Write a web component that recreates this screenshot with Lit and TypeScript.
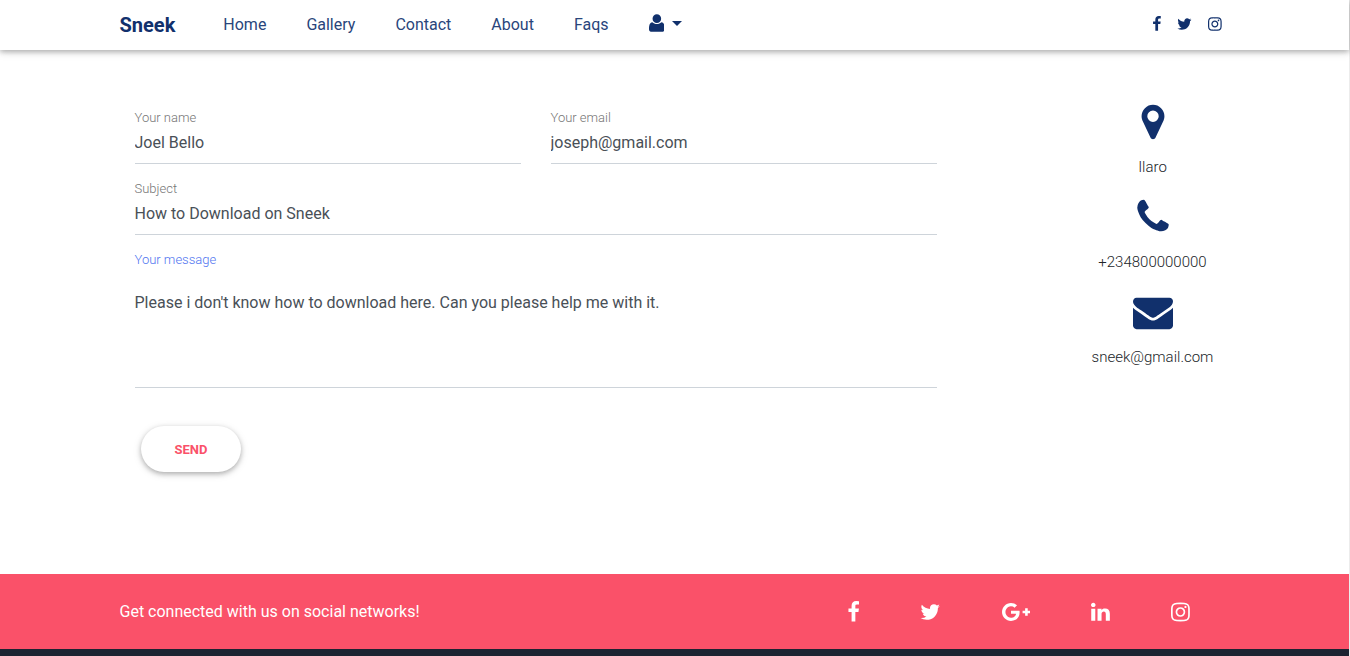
import { LitElement, html, css, svg } from "lit";
import { customElement, property } from "lit/decorators.js";

type Glyph = { box: [number, number, number, number]; path: string };

const GLYPHS: Record<string, Glyph> = {
  facebook: {
    box: [360, 0, 960, 1792],
    path: "M1343 12v264h-157q-86 0-116 36t-30 108v189h293l-39 296h-254v759h-306v-759h-255v-296h255v-218q0-186 104-288.500t277-102.500q147 0 228 12z",
  },
  twitter: {
    box: [64, 0, 1664, 1792],
    path: "M1684 408q-67 98-162 167 1 14 1 42 0 130-38 259.500t-115.500 248.500-184.500 210.500-258 146-323 54.500q-271 0-496-145 35 4 78 4 225 0 401-138-105-2-188-64.500t-114-159.500q33 5 61 5 43 0 85-11-112-23-185.500-111.500t-73.500-205.500v-4q68 38 146 41-66-44-105-115t-39-154q0-88 44-163 121 149 294.500 238.500t371.500 99.500q-8-38-8-74 0-134 94.500-228.500t228.500-94.500q140 0 236 102 109-21 205-78-37 115-142 178 93-10 186-50z",
  },
  instagram: {
    box: [128, 0, 1536, 1792],
    path: "M1152 896q0-106-75-181t-181-75-181 75-75 181 75 181 181 75 181-75 75-181zm138 0q0 164-115 279t-279 115-279-115-115-279 115-279 279-115 279 115 115 279zm108-410q0 38-27 65t-65 27-65-27-27-65 27-65 65-27 65 27 27 65zm-502-220q-7 0-76.500-.5t-105.500 0-96.500 3-103 10-71.500 18.500q-50 20-88 58t-58 88q-11 29-18.500 71.500t-10 103-3 96.500 0 105.500.5 76.500-.5 76.500 0 105.500 3 96.500 10 103 18.500 71.500q20 50 58 88t88 58q29 11 71.500 18.500t103 10 96.500 3 105.500 0 76.500-.5 76.500.5 105.500 0 96.500-3 103-10 71.500-18.500q50-20 88-58t58-88q11-29 18.500-71.500t10-103 3-96.500 0-105.500-.5-76.500.5-76.500 0-105.500-3-96.500-10-103-18.500-71.500q-20-50-58-88t-88-58q-29-11-71.500-18.500t-103-10-96.500-3-105.500 0-76.500.5zm768 630q0 229-5 317-10 208-124 322t-322 124q-88 5-317 5t-317-5q-208-10-322-124t-124-322q-5-88-5-317t5-317q10-208 124-322t322-124q88-5 317-5t317 5q208 10 322 124t124 322q5 88 5 317z",
  },
  google: {
    box: [0, 0, 2304, 1792],
    path: "M1437 913q0 208-87 370.500t-248 254-369 91.500q-149 0-285-58t-234-156-156-234-58-285 58-285 156-234 234-156 285-58q286 0 491 192l-199 191q-117-113-292-113-123 0-227.500 62t-165.500 168.500-61 232.500 61 232.500 165.500 168.500 227.500 62q83 0 152.500-23t114.500-57.500 78.500-78.500 49-83 21.500-74h-416v-252h692q12 63 12 122zm867-122v210h-209v209h-210v-209h-209v-210h209v-209h210v209h209z",
  },
  linkedin: {
    box: [128, 0, 1536, 1792],
    path: "M477 625v991h-330v-991h330zm21-306q1 73-50.500 122t-135.500 49h-2q-82 0-132-49t-50-122q0-74 51.500-122.500t134.500-48.500 133 48.500 51 122.500zm1166 729v568h-329v-530q0-105-40.500-164.500t-126.500-59.500q-63 0-105.500 34.500t-63.500 85.500q-11 30-11 81v553h-329q2-399 2-647t-1-296l-1-48h329v144h-2q20-32 41-56t56.500-52 87-43.500 114.500-15.500q171 0 275 113.500t104 332.500z",
  },
  user: {
    box: [0, -192, 1280, 1792],
    path: "M640 0a350 350 0 0 1 0 700a350 350 0 0 1 0-700zM1280 1207c0 109-72 201-160 201H160C72 1408 0 1316 0 1207C0 960 40 640 275 640C370 735 490 785 640 785S910 735 1005 640C1240 640 1280 960 1280 1207z",
  },
  marker: {
    box: [0, 0, 1792, 1792],
    path: "M1152 640q0-106-75-181t-181-75-181 75-75 181 75 181 181 75 181-75 75-181zm256 0q0 109-33 179l-364 774q-16 33-47.500 52t-67.500 19-67.500-19-46.500-52l-365-774q-33-70-33-179 0-212 150-362t362-150 362 150 150 362z",
  },
  phone: {
    box: [0, 0, 1792, 1792],
    path: "M1600 1240q0 27-10 70.500t-21 68.500q-21 50-122 106-94 51-186 51-27 0-53-3.500t-57.500-12.500-47-14.500-55.500-20.500-49-18q-98-35-175-83-127-79-264-216t-216-264q-48-77-83-175-3-9-18-49t-20.500-55.500-14.500-47-12.500-57.500-3.500-53q0-92 51-186 56-101 106-122 25-11 68.500-21t70.500-10q14 0 21 3 18 6 53 76 11 19 30 54t35 63.500 31 53.500q3 4 17.500 25t21.500 35.500 7 28.500q0 20-28.500 50t-62 55-62 53-28.500 46q0 9 5 22.500t8.500 20.500 14 24 11.500 19q76 137 174 235t235 174q2 1 19 11.500t24 14 20.500 8.500 22.500 5q18 0 46-28.500t53-62 55-62 50-28.500q14 0 28.500 7t35.500 21.500 25 17.500q25 15 53.500 31t63.500 35 54 30q70 35 76 53 3 7 3 21z",
  },
  envelope: {
    box: [0, 0, 1792, 1792],
    path: "M1792 710v794q0 66-47 113t-113 47h-1472q-66 0-113-47t-47-113v-794q44 49 101 87 362 246 497 345 57 42 92.500 65.500t94.500 48 110 24.500h2q51 0 110-24.500t94.500-48 92.500-65.500q170-123 498-345 57-39 100-87zm0-294q0 79-49 151t-122 123q-376 261-468 325-10 7-42.500 31t-54 38.500-52 32.500-57.500 27-50 9h-2q-23 0-50-9t-57.500-27-52-32.500-54-38.500-42.500-31q-91-64-262-182.500t-205-142.500q-62-42-117-115.500t-55-136.500q0-78 41.500-130t118.500-52h1472q65 0 112.500 47t47.500 113z",
  },
};

@customElement("sneek-icon")
export class SneekIcon extends LitElement {
  @property() name = "user";

  static styles = css`
    :host {
      display: inline-flex;
    }
    .glyph {
      display: block;
      height: 1em;
      width: auto;
      fill: currentColor;
    }
  `;

  render() {
    const glyph = GLYPHS[this.name];
    return html`<svg class="glyph" viewBox=${glyph.box.join(" ")} aria-hidden="true">
      ${svg`<path d=${glyph.path}></path>`}
    </svg>`;
  }
}

@customElement("app-root")
export class AppRoot extends LitElement {
  static styles = css`
    :host {
      --navy: #11306c;
      --coral: #fa5169;
      display: flex;
      flex-direction: column;
      min-height: 100vh;
      box-sizing: border-box;
      border-right: 1px solid #ececec;
      background: #fff;
      color: #212529;
      font-family: Roboto, "Liberation Sans", sans-serif;
      font-size: 16px;
      font-weight: 300;
      line-height: 24px;
    }
    a {
      color: inherit;
      text-decoration: none;
    }
    .container {
      width: 100%;
      max-width: 1140px;
      margin: 0 auto;
      padding: 0 15px;
      box-sizing: border-box;
    }
    .navbar {
      background: #fff;
      color: var(--navy);
      box-shadow: 0 2px 5px rgba(0, 0, 0, 0.26), 0 2px 10px rgba(0, 0, 0, 0.1);
    }
    .nav-row {
      display: flex;
      align-items: center;
      height: 50px;
    }
    .brand {
      margin-right: 48px;
      font-size: 20px;
      font-weight: 700;
    }
    .links {
      display: flex;
      align-items: center;
      gap: 40px;
      flex: 1;
      font-weight: 400;
    }
    .link {
      color: #29457b;
    }
    .account {
      display: flex;
      align-items: center;
      gap: 8px;
      padding: 0 0 4px;
      border: 0;
      background: none;
      color: inherit;
      font-size: 22px;
    }
    .caret {
      border: 5px solid transparent;
      border-top-color: currentColor;
      border-bottom: 0;
    }
    .social {
      display: flex;
    }
    .nav-social {
      display: flex;
      gap: 16px;
      padding: 0 8px 2px 0;
    }
    .content {
      display: grid;
      grid-template-columns: minmax(0, 1fr) 154px;
      column-gap: 124px;
      padding-top: 52px;
      padding-bottom: 102px;
    }
    .form {
      display: grid;
      grid-template-columns: 1fr 1fr;
      gap: 15px 30px;
      padding: 6px 15px 0;
    }
    .field {
      display: flex;
      flex-direction: column;
      min-width: 0;
    }
    .wide {
      grid-column: 1 / -1;
    }
    .label {
      color: #757575;
      font-size: 13px;
      line-height: 20px;
    }
    .active {
      color: #4f74f0;
    }
    .input {
      width: 100%;
      box-sizing: border-box;
      margin: 0;
      padding: 4px 0 11px;
      border: 0;
      border-bottom: 1px solid #ced4da;
      border-radius: 0;
      outline: 0;
      background: transparent;
      color: #495057;
      font-family: inherit;
      font-size: 16px;
      font-weight: 400;
      line-height: 20px;
      height: 36px;
      resize: none;
    }
    .area {
      height: 118px;
      padding-top: 23px;
    }
    .send {
      justify-self: start;
      margin: 23px 6px 0;
      padding: 14px 34px 12px;
      border: 0;
      border-radius: 23px;
      background: #fff;
      color: var(--coral);
      box-shadow: 0 2px 5px rgba(0, 0, 0, 0.26), 0 2px 10px rgba(0, 0, 0, 0.1);
      font-family: inherit;
      font-size: 13px;
      font-weight: 700;
      line-height: 20px;
      text-transform: uppercase;
    }
    .contacts {
      display: flex;
      flex-direction: column;
      gap: 18px;
      margin: 0;
      padding: 0;
      list-style: none;
      font-size: 15px;
      text-align: center;
    }
    .contact {
      display: flex;
      flex-direction: column;
      align-items: center;
      gap: 13px;
    }
    .contact-icon {
      color: var(--navy);
      font-size: 40px;
    }
    .band {
      background: var(--coral);
      color: #fff;
      font-weight: 400;
    }
    .band-row {
      display: flex;
      align-items: center;
      justify-content: space-between;
      min-height: 75px;
    }
    .band-social {
      display: flex;
      gap: 61px;
      padding-right: 40px;
      font-size: 22px;
    }
    .footer {
      flex: 1;
      min-height: 7px;
      background: #1c2331;
    }
  `;

  render() {
    return html`
      <header class="navbar">
        <nav class="container nav-row">
          <a class="brand" href="#">Sneek</a>
          <div class="links">
            ${["Home", "Gallery", "Contact", "About", "Faqs"].map(
              (text) => html`<a class="link" href="#">${text}</a>`
            )}
            <button class="account" type="button" aria-label="Account">
              <sneek-icon name="user"></sneek-icon><span class="caret"></span>
            </button>
          </div>
          <div class="nav-social">${this.socials(["facebook", "twitter", "instagram"])}</div>
        </nav>
      </header>
      <main class="container content">
        <form class="form" @submit=${(e: Event) => e.preventDefault()}>
          <div class="field">
            <label class="label" for="name">Your name</label>
            <input class="input" id="name" type="text" .value=${"Joel Bello"} />
          </div>
          <div class="field">
            <label class="label" for="email">Your email</label>
            <input class="input" id="email" type="email" .value=${"joseph@gmail.com"} />
          </div>
          <div class="field wide">
            <label class="label" for="subject">Subject</label>
            <input class="input" id="subject" type="text" .value=${"How to Download on Sneek"} />
          </div>
          <div class="field wide">
            <label class="label active" for="message">Your message</label>
            <textarea
              class="input area"
              id="message"
              spellcheck="false"
              .value=${"Please i don't know how to download here. Can you please help me with it."}
            ></textarea>
          </div>
          <button class="send" type="submit">Send</button>
        </form>
        <ul class="contacts">
          <li class="contact">
            <sneek-icon class="contact-icon" name="marker"></sneek-icon>
            <span>Ilaro</span>
          </li>
          <li class="contact">
            <sneek-icon class="contact-icon" name="phone"></sneek-icon>
            <span>+234800000000</span>
          </li>
          <li class="contact">
            <sneek-icon class="contact-icon" name="envelope"></sneek-icon>
            <span>sneek@gmail.com</span>
          </li>
        </ul>
      </main>
      <section class="band">
        <div class="container band-row">
          <span>Get connected with us on social networks!</span>
          <div class="band-social">
            ${this.socials(["facebook", "twitter", "google", "linkedin", "instagram"])}
          </div>
        </div>
      </section>
      <footer class="footer"></footer>
    `;
  }

  private socials(names: string[]) {
    return names.map(
      (name) =>
        html`<a class="social" href="#" aria-label=${name}><sneek-icon name=${name}></sneek-icon></a>`
    );
  }
}
